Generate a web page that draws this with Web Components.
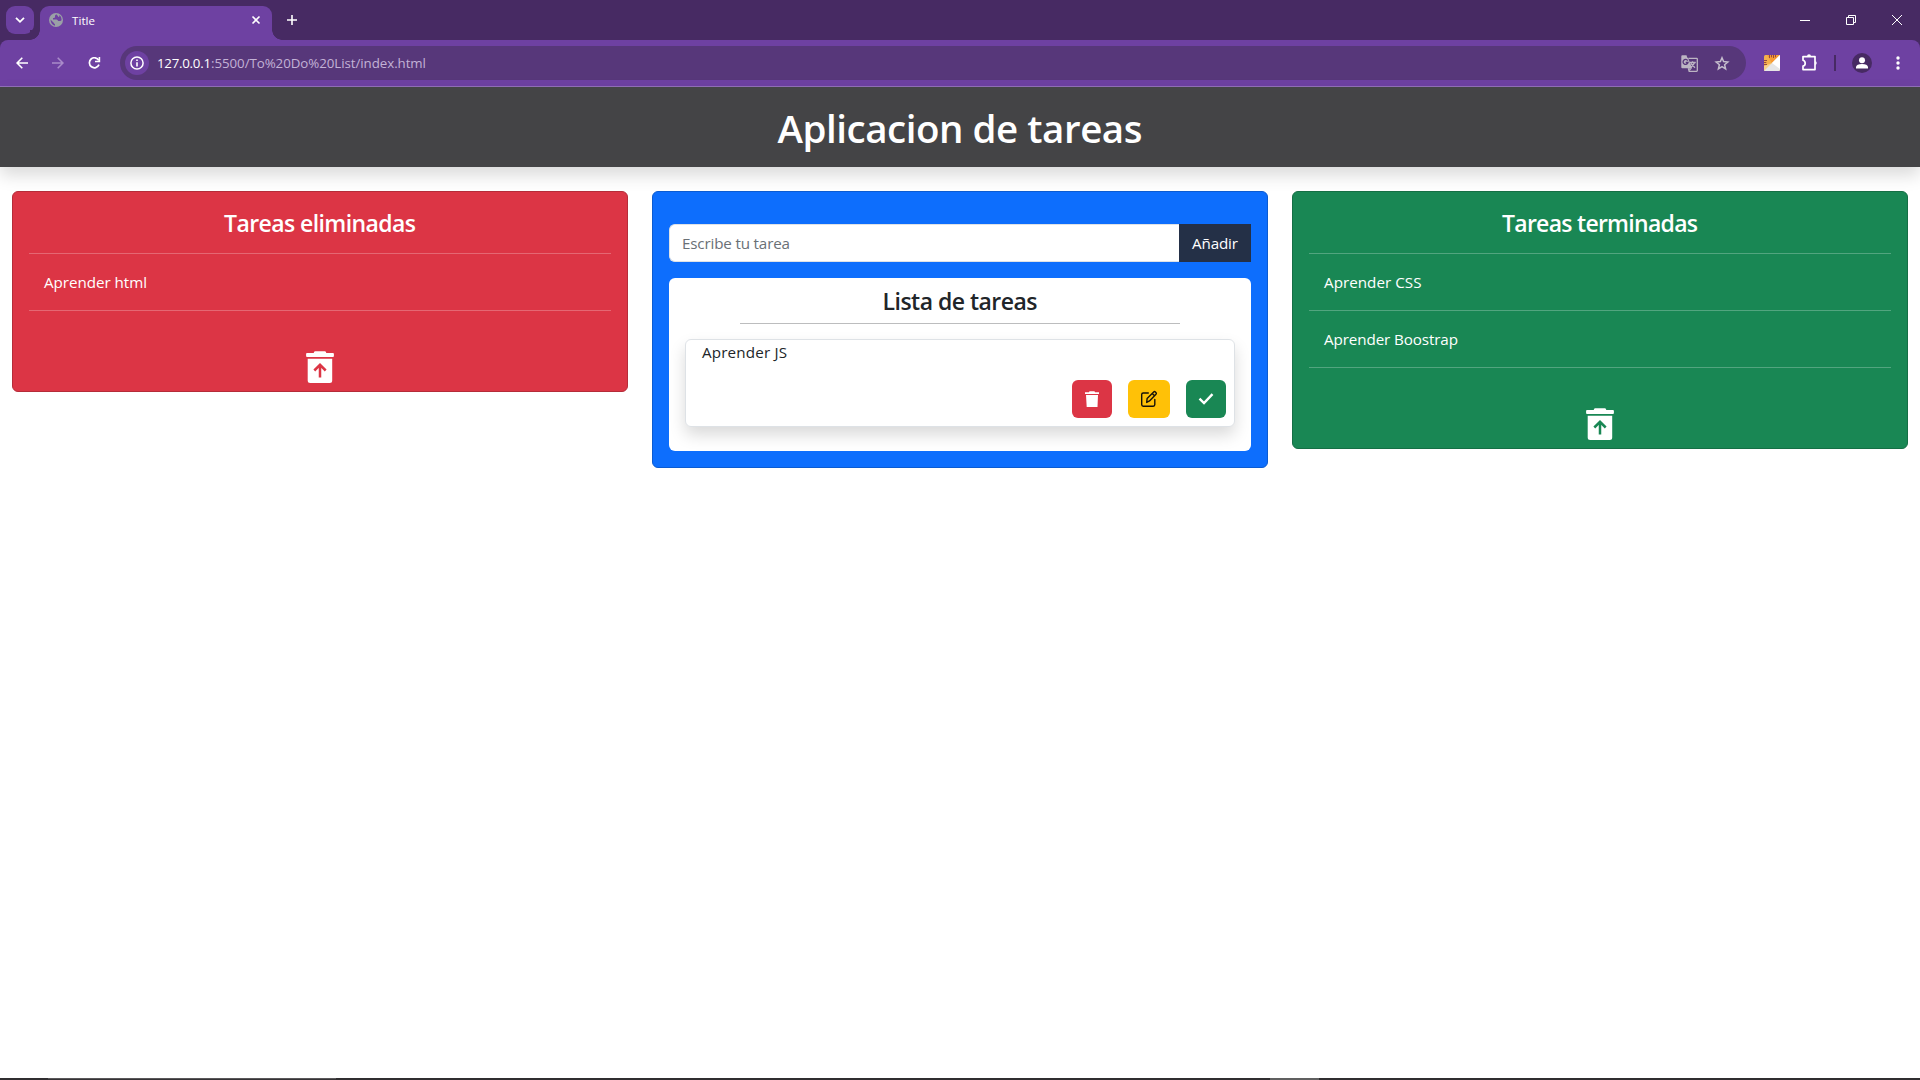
<!DOCTYPE html>
<html lang="es">
<head>
<meta charset="utf-8">
<title>Title</title>
<style>
html,body{margin:0;height:100%;overflow:hidden;background:#fff}
body{font-family:"Open Sans","Noto Sans",sans-serif;color:#212529}
</style>
</head>
<body>
<todo-app></todo-app>
<script>
const define = (name, html, ready) => {
  const tpl = document.createElement('template');
  tpl.innerHTML = html;
  customElements.define(name, class extends HTMLElement {
    constructor() {
      super();
      this.attachShadow({mode: 'open'}).append(tpl.content.cloneNode(true));
    }
    connectedCallback() { if (ready) ready(this); }
  });
};

/* Text whose tracking adapts so that it spans the width given in "w". */
define('fit-text', `<style>:host{display:inline-block;white-space:pre}</style><slot></slot>`, el => {
  const w = +el.getAttribute('w'), n = el.textContent.length;
  el.style.letterSpacing = '0px';
  const natural = el.getBoundingClientRect().width;
  const ls = (w - natural) / (n - 1);
  el.style.letterSpacing = ls.toFixed(3) + 'px';
  el.style.marginRight = (-ls).toFixed(3) + 'px';
});

define('trash-up', `<style>:host{display:block;width:28px;height:32px}svg{display:block}</style>
<svg width="28" height="32" viewBox="0 0 28 32">
<path fill="#fff" d="M1 2H7.700Q8 .2 9 .2H19Q20 .2 20.300 2H27Q27.900 2 27.900 3V5Q27.900 6 27 6H1Q.1 6 .1 5V3Q.1 2 1 2ZM1.700 7.800H26.200V29.500Q26.200 32 23.700 32H4.200Q1.700 32 1.700 29.500Z"/>
<path fill="none" stroke="var(--bg)" stroke-width="2.500" d="M14 26.500V14M8.300 19.500L14 13.800L19.700 19.500"/>
</svg>`);

define('result-card', `<style>
:host{display:flex;flex-direction:column;align-items:stretch;box-sizing:border-box;background:var(--bg);border:1px solid var(--edge);border-radius:6px;color:#fff;padding:16px 16px 8px}
.head{font-size:23px;font-weight:600;line-height:31px;height:29px;display:flex;justify-content:center}
.foot{height:56px;display:flex;justify-content:center;align-items:flex-end;padding-top:16px}
hr{border:0;height:1px;background:rgba(255,255,255,.25);margin:16px 0 0}
</style>
<div class="head"><slot name="head"></slot></div><hr>
<slot></slot>
<div class="foot"><trash-up></trash-up></div>`);

define('result-row', `<style>
:host{display:block}
.t{padding:0 15px;margin-top:16px;height:24px;line-height:24px;font-size:15.200px}
hr{border:0;height:1px;background:rgba(255,255,255,.25);margin:16px 0 0}
</style><div class="t"><slot></slot></div><hr>`);

define('icon-button', `<style>
:host{display:flex;align-items:center;justify-content:center;height:38px;border-radius:6px}
</style><slot></slot>`);

define('task-item', `<style>
:host{display:block;box-sizing:border-box;height:88px;margin:15px 16px 0;background:#fff;border:1px solid #dee2e6;border-radius:6px;box-shadow:0 8px 16px rgba(0,0,0,.15);padding:0 8px 8px 16px}
.t{font-size:15.200px;line-height:24px;height:24px}
.b{display:flex;justify-content:flex-end;gap:16px;margin-top:16px}
svg{display:block}
.r{width:40px;background:#dc3545}.y{width:42px;background:#ffc107}.g{width:40px;background:#198754}
</style>
<div class="t"><slot></slot></div>
<div class="b">
<icon-button class="r"><svg width="16" height="18" viewBox="0 0 16 18"><path fill="#fff" d="M1 2.200H5L5.500 1.200H10.500L11 2.200H15V3.900H1ZM2 5H14L13.500 17H2.700Z"/></svg></icon-button>
<icon-button class="y"><svg width="18" height="18" viewBox="0 0 18 18" fill="none" stroke="#15120a" stroke-width="1.400" stroke-linejoin="round" stroke-linecap="round"><path d="M8.300 3H3.200Q1.700 3 1.700 4.500V14.600Q1.700 16.200 3.200 16.200H13.200Q14.800 16.200 14.800 14.600V9.500M6.700 12.400L7.100 8.600L13.700 1.900Q14.400 1.200 15.300 1.900L16.100 2.700Q16.700 3.500 16 4.200L9.500 10.900L6.700 12.400ZM12.200 3.500L14.500 5.800"/></svg></icon-button>
<icon-button class="g"><svg width="16" height="16" viewBox="0 0 16 16"><path fill="none" stroke="#fff" stroke-width="2.400" d="M1.500 7.700L6 12L14.500 3.200"/></svg></icon-button>
</div>`);

define('task-form', `<style>
:host{display:flex;height:38px}
.in{flex:1;box-sizing:border-box;background:#fff;border:1px solid #dee2e6;border-right:0;border-radius:6px 0 0 6px;padding-left:12px;color:#6a7076}
.in,.add{font-size:15.200px;line-height:36px}
.add{width:72px;background:#243047;color:#fff;line-height:38px;display:flex;justify-content:center}
</style><div class="in"><fit-text w="108">Escribe tu tarea</fit-text></div>
<div class="add"><fit-text w="46">Añadir</fit-text></div>`);

define('task-board', `<style>
:host{display:block;box-sizing:border-box;height:277px;background:#0d6efd;border:1px solid #0b5bd1;border-radius:6px;padding:32px 16px 0}
.list{display:block;margin-top:16px;height:173px;box-sizing:border-box;background:#fff;border-radius:6px;padding-top:8px;overflow:hidden}
.h{font-size:23px;font-weight:540;line-height:31px;height:29px;display:flex;justify-content:center}
hr{border:0;height:1px;width:440px;background:#bcbdbe;margin:8px auto 0}
</style>
<task-form></task-form>
<div class="list"><div class="h"><fit-text w="155">Lista de tareas</fit-text></div><hr><slot></slot></div>`);

define('page-header', `<style>
:host{display:flex;justify-content:center;align-items:center;height:80px;background:#444446;color:#fff;font-size:38.500px;font-weight:600;line-height:48px;box-shadow:0 8px 16px rgba(0,0,0,.15);box-sizing:border-box;padding-top:2px}
</style><slot></slot>`);

define('tab-strip', `<style>
:host{display:flex;height:40px;background:#472a63;color:#fff;box-sizing:border-box}
svg{display:block}
.search{width:28px;height:28px;margin:6px 6px 0;border-radius:9px;background:#6c40a0;display:flex;align-items:center;justify-content:center}
.tab{width:232px;height:34px;margin-top:6px;background:#6e41a2;border-radius:9px 9px 0 0;box-sizing:border-box;display:flex;align-items:center;padding:0 11px 6px 9px;font-size:11.500px;line-height:16px}
.tab .t{flex:1;margin-left:9px;padding-top:1px}
.foot{width:10px;height:10px;align-self:flex-end;background:radial-gradient(circle at 100% 0,#472a63 9.500px,#6e41a2 10px)}
.foot.l{margin-left:-10px;background:radial-gradient(circle at 0 0,#472a63 9.500px,#6e41a2 10px)}
.plus{margin:15px 0 0 5px}
.win{margin-left:auto;display:flex;gap:36px;padding:15px 18px 0 0}
</style>
<div class="search"><svg width="10" height="8" viewBox="0 0 10 8"><path fill="none" stroke="#fff" stroke-width="1.800" d="M1 1.800L5 5.800L9 1.800"/></svg></div>
<div class="foot l"></div>
<div class="tab">
<svg width="14" height="14" viewBox="0 0 14 14"><circle cx="7" cy="7" r="7" fill="#9aa0a6"/><path fill="#6e41a2" d="M7.500 1.300Q5.500 2 6 3.500Q6.300 4.500 5 5H4V6.500H7.500Q9 6.500 9 8H11Q12.500 8 12.600 6.500Q12.500 3.500 10.500 2Q10.800 4 9 4V3Q8 2.500 7.500 1.300ZM1.500 6.500L5 10Q5 11 6 11V12.700Q2 12 1.500 6.500Z"/></svg>
<span class="t"><fit-text w="23">Title</fit-text></span>
<svg width="10" height="10" viewBox="0 0 10 10"><path fill="none" stroke="#fff" stroke-width="1.600" d="M1.500 1.500L8.500 8.500M8.500 1.500L1.500 8.500"/></svg>
</div>
<div class="foot"></div>
<svg class="plus" width="10" height="10" viewBox="0 0 10 10"><path fill="none" stroke="#fff" stroke-width="1.600" d="M5 0V10M0 5H10"/></svg>
<div class="win">
<svg width="10" height="11" viewBox="0 0 10 11"><path fill="#fff" d="M0 5H10V6H0Z"/></svg>
<svg width="10" height="10" viewBox="0 0 10 10"><path fill="none" stroke="#fff" d="M.5 2.500H7.500V9.500H.5ZM2.500 2.500V.5H9.500V7.500H7.500"/></svg>
<svg width="10" height="10" viewBox="0 0 10 10"><path fill="none" stroke="#fff" d="M0 0L10 10M10 0L0 10"/></svg>
</div>`);

define('nav-bar', `<style>
:host{display:block;background:#472a63}
.bar{display:flex;align-items:center;height:47px;box-sizing:border-box;background:#6e41a2;border-bottom:1px solid #9270b9;border-radius:8px 8px 0 0;padding:0 20px 0 16px}
svg{display:block;flex:none}
.omni{flex:1;height:34px;margin:0 0 0 19px;background:#57377a;border-radius:17px;display:flex;align-items:center;box-sizing:border-box;padding:0 16px 0 5px}
.info{width:24px;height:24px;border-radius:12px;background:#6e41a2;display:flex;align-items:center;justify-content:center}
.url{margin-left:8px;flex:1;font-size:13.300px;line-height:20px;color:#c3b2d6;display:flex;padding-bottom:1px;padding-top:1px}
.url b{font-weight:400;color:#fff}
.sep{width:2px;height:16px;background:#472a63;margin:0 16px 0 16px}
.user{width:20px;height:20px;border-radius:10px;background:#472a63}
</style>
<div class="bar">
<svg width="12" height="12" viewBox="0 0 12 12"><path fill="none" stroke="#fff" stroke-width="1.600" d="M12 6H1.300M6.300 .8L1.100 6L6.300 11.200"/></svg>
<svg style="margin-left:24px" width="12" height="12" viewBox="0 0 12 12"><path fill="none" stroke="#a98bc9" stroke-width="1.600" d="M0 6H10.700M5.700 .8L10.900 6L5.700 11.200"/></svg>
<svg style="margin-left:24px" width="13" height="12" viewBox="0 0 13 12"><path fill="none" stroke="#fff" stroke-width="1.700" d="M10.800 3.400A5 5 0 1 0 11 7.700"/><path fill="#fff" d="M12.200 0V5.300H7V3.800H10.600V0Z"/></svg>
<div class="omni">
<div class="info"><svg width="14" height="14" viewBox="0 0 14 14"><circle cx="7" cy="7" r="6.100" fill="none" stroke="#fff" stroke-width="1.500"/><path fill="#fff" d="M6.200 6.200H7.800V10.500H6.200ZM6.200 3.500H7.800V5.100H6.200Z"/></svg></div>
<div class="url"><b><fit-text w="54">127.0.0.1</fit-text></b><fit-text w="215">:5500/To%20Do%20List/index.html</fit-text></div>
<svg width="17" height="17" viewBox="0 0 17 17"><path fill="#bcb5c3" d="M1.300 .3H5.500L6.300 2.800H7L11.200 13.200H1.300Q.3 13.200 .3 12.200V1.300Q.3 .3 1.300 .3Z"/><path fill="none" stroke="#57377a" stroke-width="1.300" d="M6.700 5.600A2.500 2.500 0 1 0 7 7.500H4.700"/><path fill="none" stroke="#bcb5c3" stroke-width="1.300" d="M7.500 3.400H15.600Q16.300 3.400 16.300 4.100V15.500Q16.300 16.300 15.600 16.300H8.200L7.300 13.300M8.800 7.500H14.800M11.500 6.200V7.500M13.600 7.500Q12.800 10 9.800 12.200M9.900 8.500L14 12.700"/><path fill="#bcb5c3" d="M8 13.200H11L8.500 16Z"/></svg>
<svg style="margin-left:16px" width="16" height="15" viewBox="0 0 16 15"><path fill="none" stroke="#c5bdcd" stroke-width="1.500" stroke-linejoin="miter" d="M8 1.800L9.600 5.600L13.800 6L10.600 8.700L11.600 12.800L8 10.600L4.400 12.800L5.400 8.700L2.200 6L6.400 5.600Z"/></svg>
</div>
<svg style="margin-left:18px" width="16" height="16" viewBox="0 0 16 16"><rect width="16" height="16" rx="1.500" fill="#f4b04d"/><path fill="#f79a35" d="M3 0H16L8 8Z"/><path fill="#f7d08a" d="M0 16V11L8 8L5 13Z"/><path fill="#e6e6e6" d="M16 0V14.500Q16 16 14.500 16H0Z"/><path fill="#fff" d="M16 0L0 16L8 8L16 14Z"/><path stroke="#944b3d" fill="none" d="M5.500 0V3M7.500 0V2.300M9.500 0V3M11.500 0V2.300M0 5.500H3M0 7.500H2.300M0 9.500H3"/></svg>
<svg style="margin:-1px 0 0 22px" width="16" height="17" viewBox="0 0 16 17"><path fill="none" stroke="#fff" stroke-width="1.700" stroke-linejoin="round" d="M1 2.600H13V15.600H1V12.200Q3.200 11.700 3.200 9.300Q3.200 7 1 6.300Z"/><path fill="#fff" d="M5 2.500A2 2.200 0 0 1 9 2.500ZM13.200 7A2.200 2.200 0 0 1 13.200 11.200Z"/></svg>
<div class="sep"></div>
<svg class="user" width="20" height="20" viewBox="0 0 20 20"><circle cx="10" cy="7.200" r="3" fill="#fff"/><path fill="#fff" d="M4 15.500V14Q4.500 11 10 11Q15.500 11 16 14V15.500Z"/></svg>
<svg style="margin-left:24px" width="4" height="14" viewBox="0 0 4 14"><g fill="#fff"><circle cx="2" cy="2" r="1.700"/><circle cx="2" cy="7" r="1.700"/><circle cx="2" cy="12" r="1.700"/></g></svg>
</div>`);

define('task-strip', `<style>
:host{display:flex;height:2px;background:#302e30}
i{display:block;height:2px;background:linear-gradient(#5a585a 50%,#353335 50%)}
.a{width:288px;margin-left:48px}.b{width:49px;margin-left:934px;background:#606060}
</style><i class="a"></i><i class="b"></i>`);

define('todo-app', `<style>
:host{display:flex;flex-direction:column;width:1920px;height:1080px;background:#fff}
main{flex:1;display:grid;grid-template-columns:repeat(3,616px);gap:24px;align-items:start;padding:24px 12px 0}
.red{--bg:#dc3545;--edge:#b52c39}
.green{--bg:#198754;--edge:#156f45}
</style>
<tab-strip></tab-strip><nav-bar></nav-bar>
<page-header><fit-text w="365">Aplicacion de tareas</fit-text></page-header>
<main>
<result-card class="red"><fit-text slot="head" w="192">Tareas eliminadas</fit-text>
<result-row><fit-text w="103">Aprender html</fit-text></result-row></result-card>
<task-board><task-item><fit-text w="85">Aprender JS</fit-text></task-item></task-board>
<result-card class="green"><fit-text slot="head" w="196">Tareas terminadas</fit-text>
<result-row><fit-text w="97.5">Aprender CSS</fit-text></result-row>
<result-row><fit-text w="134">Aprender Boostrap</fit-text></result-row></result-card>
</main>
<task-strip></task-strip>`);
</script>
</body>
</html>
